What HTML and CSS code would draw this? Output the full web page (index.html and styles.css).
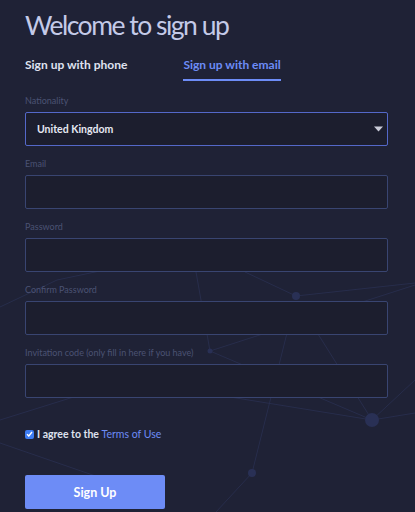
FILE: index.html
```html
<!DOCTYPE html>
<html lang="en">
<head>
<meta charset="utf-8">
<title>Welcome to sign up</title>
<link rel="stylesheet" href="styles.css">
</head>
<body>
<svg class="plexus" viewBox="0 0 415 512" width="415" height="512" aria-hidden="true">
  <g stroke="#2a3050" stroke-width="0.8" fill="none">
    <line x1="0" y1="307" x2="57" y2="280"/>
    <line x1="57" y1="280" x2="200" y2="250"/>
    <line x1="245" y1="272" x2="296" y2="296"/>
    <line x1="296" y1="296" x2="415" y2="283"/>
    <line x1="196" y1="272" x2="210" y2="351"/>
    <line x1="210" y1="351" x2="415" y2="285"/>
    <line x1="210" y1="351" x2="372" y2="420"/>
    <line x1="287" y1="333" x2="252" y2="473"/>
    <line x1="252" y1="473" x2="216" y2="512"/>
    <line x1="230" y1="397" x2="372" y2="420"/>
    <line x1="372" y1="420" x2="415" y2="380"/>
    <line x1="372" y1="420" x2="415" y2="413"/>
    <line x1="318" y1="334" x2="372" y2="420"/>
    <line x1="0" y1="443" x2="165" y2="500"/>
    <line x1="80" y1="395" x2="0" y2="420"/>
  </g>
  <g fill="#293055">
    <circle cx="296" cy="296" r="4"/>
    <circle cx="210" cy="351" r="2.5"/>
    <circle cx="372" cy="420" r="7"/>
    <circle cx="252" cy="473" r="4"/>
  </g>
</svg>
<main class="page">
  <h1 class="title">Welcome to sign up</h1>
  <nav class="tabs">
    <span class="tab">Sign up with phone</span>
    <span class="tab tab-active">Sign up with email</span>
  </nav>
  <form class="form">
    <div class="field">
      <label class="label">Nationality</label>
      <div class="box box-select">
        <span class="select-value">United Kingdom</span>
        <svg class="caret" width="9" height="6" viewBox="0 0 9 6"><path d="M0 0.5 H9 L4.5 5.5 Z" fill="#c9cbd8"/></svg>
      </div>
    </div>
    <div class="field">
      <label class="label">Email</label>
      <div class="box"></div>
    </div>
    <div class="field">
      <label class="label">Password</label>
      <div class="box"></div>
    </div>
    <div class="field">
      <label class="label">Confirm Password</label>
      <div class="box"></div>
    </div>
    <div class="field">
      <label class="label">Invitation code (only fill in here if you have)</label>
      <div class="box"></div>
    </div>
    <div class="agree">
      <span class="check">
        <svg width="7" height="6" viewBox="0 0 7 6"><path d="M1 3.2 L2.8 5 L6 1" stroke="#fff" stroke-width="1.4" fill="none"/></svg>
      </span>
      <span class="agree-text">I agree to the <a class="link">Terms of Use</a></span>
    </div>
    <div class="actions">
      <button type="button" class="btn">Sign Up</button>
    </div>
  </form>
</main>
</body>
</html>
```

FILE: styles.css
```css
html, body {
  margin: 0;
  padding: 0;
}
body {
  width: 415px;
  height: 512px;
  overflow: hidden;
  background: #1f2236;
  font-family: "Lato", "Open Sans", sans-serif;
  position: relative;
}
.plexus {
  position: absolute;
  left: 0;
  top: 0;
  z-index: 0;
}
.page {
  position: relative;
  z-index: 1;
  padding: 9px 27px 0 25px;
}
.title {
  margin: 0;
  font-size: 26.5px;
  line-height: 32px;
  font-weight: 400;
  color: #c4cae8;
  letter-spacing: -1.5px;
}
.tabs {
  display: flex;
  margin-top: 16px;
  gap: 56px;
}
.tab {
  font-size: 12px;
  line-height: 16px;
  font-weight: 700;
  color: #dfe2f0;
  padding-bottom: 6px;
  border-bottom: 2px solid transparent;
}
.tab-active {
  color: #6d8cf6;
  border-bottom-color: #6d8cf6;
}
.form {
  display: flex;
  flex-direction: column;
  margin-top: 14px;
}
.field {
  display: flex;
  flex-direction: column;
  gap: 5px;
  margin-bottom: 12px;
}
.label {
  font-size: 9px;
  line-height: 12px;
  color: #4b5273;
}
.box {
  height: 32px;
  border: 1px solid #394571;
  border-radius: 2px;
  background: #1c1e2e;
}
.box-select {
  border-color: #5468c9;
  display: flex;
  align-items: center;
  justify-content: space-between;
  padding: 0 4px 0 11px;
}
.select-value {
  font-size: 10.5px;
  font-weight: 700;
  color: #e6e8f2;
}
.caret {
  display: block;
}
.agree {
  display: flex;
  align-items: center;
  gap: 3px;
  margin-top: 17px;
  height: 14px;
}
.check {
  width: 9px;
  height: 9px;
  border-radius: 2px;
  background: #3d7cf2;
  display: flex;
  align-items: center;
  justify-content: center;
}
.agree-text {
  font-size: 10.5px;
  line-height: 14px;
  font-weight: 700;
  color: #dfe2ee;
}
.link {
  color: #6d8cf6;
  font-weight: 400;
}
.actions {
  margin-top: 34px;
}
.btn {
  width: 140px;
  height: 34px;
  border: none;
  border-radius: 2px;
  background: #6d8cf6;
  color: #ffffff;
  font-family: "Lato", sans-serif;
  font-size: 12.5px;
  font-weight: 700;
  cursor: pointer;
}
```
